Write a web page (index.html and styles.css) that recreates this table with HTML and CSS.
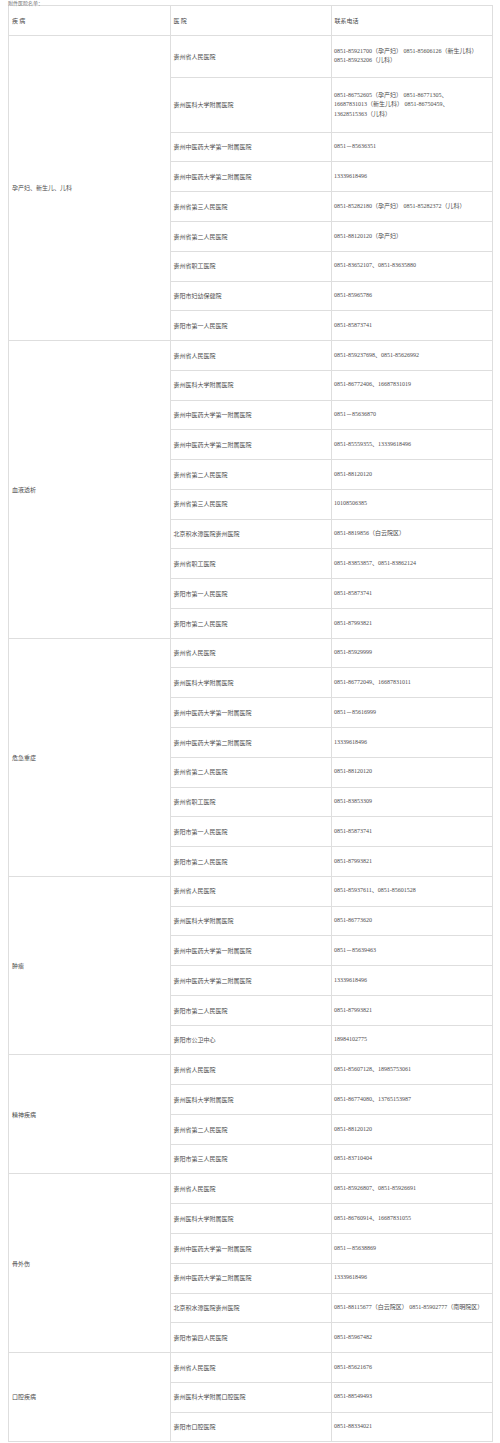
FILE: index.html
```html
<!DOCTYPE html>
<html lang="zh-CN">
<head>
<meta charset="utf-8">
<title>附件医院名单</title>
<link rel="stylesheet" href="styles.css">
</head>
<body>
<p class="caption">附件医院名单：</p>
<table class="list">
  <colgroup><col class="c1"><col class="c2"><col class="c3"></colgroup>
  <tr class="head"><td>疾 病</td><td>医 院</td><td>联系电话</td></tr>

  <tr class="r2l"><td rowspan="9">孕产妇、新生儿、儿科</td><td>贵州省人民医院</td><td class="tel">0851-85921700（孕产妇） 0851-85606126（新生儿科）<br>0851-85923206（儿科）</td></tr>
  <tr class="r3l"><td>贵州医科大学附属医院</td><td class="tel">0851-86752605（孕产妇） 0851-86771305、<br>16687831013（新生儿科） 0851-86750459、<br>13628515363（儿科）</td></tr>
  <tr><td>贵州中医药大学第一附属医院</td><td class="tel">0851－85636351</td></tr>
  <tr><td>贵州中医药大学第二附属医院</td><td class="tel">13339618496</td></tr>
  <tr><td>贵州省第三人民医院</td><td class="tel">0851-85282180（孕产妇） 0851-85282372（儿科）</td></tr>
  <tr><td>贵州省第二人民医院</td><td class="tel">0851-88120120（孕产妇）</td></tr>
  <tr><td>贵州省职工医院</td><td class="tel">0851-83652107、0851-83635880</td></tr>
  <tr><td>贵阳市妇幼保健院</td><td class="tel">0851-85965786</td></tr>
  <tr><td>贵阳市第一人民医院</td><td class="tel">0851-85873741</td></tr>

  <tr><td rowspan="10">血液透析</td><td>贵州省人民医院</td><td class="tel">0851-859237698、0851-85626992</td></tr>
  <tr><td>贵州医科大学附属医院</td><td class="tel">0851-86772406、16687831019</td></tr>
  <tr><td>贵州中医药大学第一附属医院</td><td class="tel">0851－85636870</td></tr>
  <tr><td>贵州中医药大学第二附属医院</td><td class="tel">0851-85559355、13339618496</td></tr>
  <tr><td>贵州省第二人民医院</td><td class="tel">0851-88120120</td></tr>
  <tr><td>贵州省第三人民医院</td><td class="tel">10108506385</td></tr>
  <tr><td>北京积水潭医院贵州医院</td><td class="tel">0851-8819856（白云院区）</td></tr>
  <tr><td>贵州省职工医院</td><td class="tel">0851-83853857、0851-83862124</td></tr>
  <tr><td>贵阳市第一人民医院</td><td class="tel">0851-85873741</td></tr>
  <tr><td>贵阳市第二人民医院</td><td class="tel">0851-87993821</td></tr>

  <tr><td rowspan="8">危急重症</td><td>贵州省人民医院</td><td class="tel">0851-85929999</td></tr>
  <tr><td>贵州医科大学附属医院</td><td class="tel">0851-86772049、16687831011</td></tr>
  <tr><td>贵州中医药大学第一附属医院</td><td class="tel">0851－85616999</td></tr>
  <tr><td>贵州中医药大学第二附属医院</td><td class="tel">13339618496</td></tr>
  <tr><td>贵州省第二人民医院</td><td class="tel">0851-88120120</td></tr>
  <tr><td>贵州省职工医院</td><td class="tel">0851-83853309</td></tr>
  <tr><td>贵阳市第一人民医院</td><td class="tel">0851-85873741</td></tr>
  <tr><td>贵阳市第二人民医院</td><td class="tel">0851-87993821</td></tr>

  <tr><td rowspan="6">肿瘤</td><td>贵州省人民医院</td><td class="tel">0851-85937611、0851-85601528</td></tr>
  <tr><td>贵州医科大学附属医院</td><td class="tel">0851-86773620</td></tr>
  <tr><td>贵州中医药大学第一附属医院</td><td class="tel">0851－85639463</td></tr>
  <tr><td>贵州中医药大学第二附属医院</td><td class="tel">13339618496</td></tr>
  <tr><td>贵阳市第二人民医院</td><td class="tel">0851-87993821</td></tr>
  <tr><td>贵阳市公卫中心</td><td class="tel">18984102775</td></tr>

  <tr><td rowspan="4">精神疾病</td><td>贵州省人民医院</td><td class="tel">0851-85607128、18985753061</td></tr>
  <tr><td>贵州医科大学附属医院</td><td class="tel">0851-86774080、13765153987</td></tr>
  <tr><td>贵州省第二人民医院</td><td class="tel">0851-88120120</td></tr>
  <tr><td>贵阳市第三人民医院</td><td class="tel">0851-83710404</td></tr>

  <tr><td rowspan="6">骨外伤</td><td>贵州省人民医院</td><td class="tel">0851-85926807、0851-85926691</td></tr>
  <tr><td>贵州医科大学附属医院</td><td class="tel">0851-86760914、16687831055</td></tr>
  <tr><td>贵州中医药大学第一附属医院</td><td class="tel">0851－85638869</td></tr>
  <tr><td>贵州中医药大学第二附属医院</td><td class="tel">13339618496</td></tr>
  <tr><td>北京积水潭医院贵州医院</td><td class="tel">0851-88115677（白云院区） 0851-85902777（南明院区）</td></tr>
  <tr><td>贵阳市第四人民医院</td><td class="tel">0851-85967482</td></tr>

  <tr><td rowspan="3">口腔疾病</td><td>贵州省人民医院</td><td class="tel">0851-85621676</td></tr>
  <tr><td>贵州医科大学附属口腔医院</td><td class="tel">0851-88549493</td></tr>
  <tr><td>贵阳市口腔医院</td><td class="tel">0851-88334021</td></tr>
</table>
</body>
</html>
```
FILE: styles.css
```css
html, body {
  margin: 0;
  padding: 0;
  background: #ffffff;
}

body {
  font-family: "Liberation Serif", "Noto Sans CJK SC", serif;
  color: #4d4d4d;
}

.caption {
  margin: 0 0 0 8px;
  height: 5px;
  font-size: 5px;
  line-height: 5px;
  color: #777777;
  font-family: "Noto Sans CJK SC", sans-serif;
  overflow: visible;
}

.list {
  margin-left: 8px;
  margin-top: 0.3px;
  width: 484px;
  table-layout: fixed;
  border-collapse: collapse;
  font-size: 6px;
}

.list col.c1 { width: 161.5px; }
.list col.c2 { width: 161px; }
.list col.c3 { width: 161.5px; }

.list td {
  border: 1px solid #dedede;
  padding: 0 3px;
  vertical-align: middle;
  white-space: nowrap;
  overflow: hidden;
  line-height: 9.5px;
  font-family: "Noto Sans CJK SC", sans-serif;
}

.list td.tel {
  font-family: "Liberation Serif", "Noto Sans CJK SC", serif;
  padding-left: 2.5px;
}

.list tr { height: 29.77px; }
.list tr.head { height: 29.7px; }
.list tr.r2l { height: 42px; }
.list tr.r3l { height: 54.7px; }
```
